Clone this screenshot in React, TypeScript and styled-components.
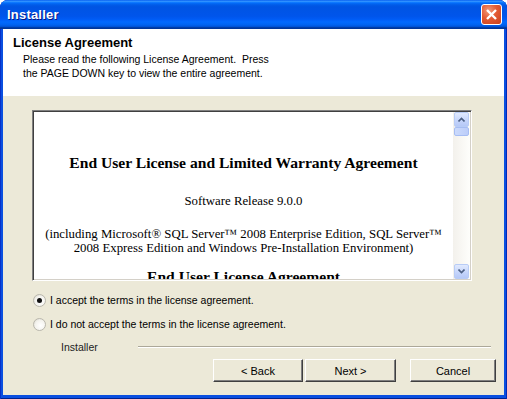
import React from 'react';
import styled, { createGlobalStyle } from 'styled-components';

const GlobalStyle = createGlobalStyle`
  html, body {
    margin: 0;
    padding: 0;
    background: #ffffff;
  }
  body {
    font-family: "Liberation Sans", Arial, sans-serif;
    font-size: 10.5px;
    color: #000;
  }
`;

const Window = styled.div`
  width: 507px;
  height: 399px;
  display: flex;
  flex-direction: column;
  background: #0a4fe0;
  border-radius: 8px 8px 0 0;
  box-shadow: inset 1px 0 #0831c8, inset -1px 0 #0029b8, inset 0 -1px #00228f;
  overflow: hidden;
`;

const TitleBar = styled.div`
  height: 29px;
  flex: none;
  display: flex;
  align-items: center;
  justify-content: space-between;
  padding: 0 5px 0 7px;
  background: linear-gradient(
    to bottom,
    #0058ee 0%,
    #3593ff 4%,
    #288eff 6%,
    #127dff 8%,
    #036ffc 10%,
    #0262ee 14%,
    #0057e5 20%,
    #0054e3 24%,
    #0055eb 56%,
    #005bf5 66%,
    #026afe 76%,
    #0062ef 86%,
    #0052d6 92%,
    #0040ab 94%,
    #003092 100%
  );
`;

const Title = styled.span`
  font-family: "Liberation Sans", Arial, sans-serif;
  font-weight: bold;
  font-size: 13px;
  color: #fff;
  text-shadow: 1px 1px #0a1883;
  letter-spacing: 0.2px;
`;

const CloseButton = styled.div`
  width: 21px;
  height: 21px;
  box-sizing: border-box;
  border: 1px solid #fff;
  border-radius: 3px;
  background: radial-gradient(circle at 35% 30%, #f29a7a 0%, #e35a33 45%, #c9401c 100%);
  display: flex;
  align-items: center;
  justify-content: center;
`;

const Body = styled.div`
  flex: 1;
  display: flex;
  flex-direction: column;
  margin: 0 3px 4px 3px;
  background: #ece9d8;
`;

const Header = styled.div`
  height: 67px;
  flex: none;
  box-sizing: border-box;
  background: #fff;
  padding: 6px 0 0 10px;
`;

const HeaderTitle = styled.div`
  font-weight: bold;
  font-size: 13px;
  line-height: 15px;
`;

const HeaderText = styled.div`
  margin: 2px 0 0 10px;
  line-height: 14px;
  white-space: pre;
`;

const LicenseBox = styled.div`
  margin: 14px 0 0 29px;
  width: 440px;
  height: 171px;
  box-sizing: border-box;
  display: flex;
  background: #fff;
  border: 1px solid;
  border-color: #808080 #ffffff #ffffff #808080;
  box-shadow: inset 1px 1px #404040, inset -1px -1px #d4d0c8;
  padding: 1px;
`;

const Doc = styled.div`
  flex: 1;
  overflow: hidden;
  text-align: center;
  font-family: "Liberation Serif", "Times New Roman", serif;
  font-size: 12.8px;
  padding-top: 42px;
`;

const DocHeading = styled.div<{ gap?: number }>`
  font-weight: bold;
  font-size: 15.6px;
  line-height: 18px;
  margin-top: ${(p) => p.gap ?? 0}px;
  white-space: nowrap;
`;

const DocLine = styled.div<{ gap?: number }>`
  line-height: 14px;
  margin-top: ${(p) => p.gap ?? 0}px;
  white-space: nowrap;
`;

const ScrollBar = styled.div`
  width: 17px;
  flex: none;
  display: flex;
  flex-direction: column;
  background: linear-gradient(to right, #f3f1ec, #fefefb);
`;

const ScrollButton = styled.div`
  height: 15px;
  flex: none;
  margin: 0 1px 0 1px;
  box-sizing: border-box;
  border: 1px solid #b8ccf6;
  border-radius: 2px;
  background: linear-gradient(to bottom, #e1eafe, #c4d4fb 60%, #b6c9f7);
  display: flex;
  align-items: center;
  justify-content: center;
`;

const ScrollThumb = styled.div`
  height: 9px;
  flex: none;
  margin: 0 1px;
  box-sizing: border-box;
  border: 1px solid #a6bdf3;
  border-radius: 2px;
  background: linear-gradient(to right, #cbdafc, #bccdf9);
`;

const ScrollTrack = styled.div`
  flex: 1;
`;

const Options = styled.div`
  margin-top: 11px;
  display: flex;
  flex-direction: column;
  gap: 8px;
`;

const OptionRow = styled.label`
  height: 16px;
  display: flex;
  align-items: center;
  gap: 4px;
  padding-left: 30px;
`;

const Radio = styled.span<{ checked?: boolean }>`
  width: 13px;
  height: 13px;
  box-sizing: border-box;
  border-radius: 50%;
  border: 1px solid #b9b7ad;
  background: radial-gradient(circle at 60% 60%, #ffffff 0%, #f4f3ee 55%, #d6d3c7 100%);
  display: flex;
  align-items: center;
  justify-content: center;
  &::after {
    content: '';
    width: 5px;
    height: 5px;
    border-radius: 50%;
    background: ${(p) => (p.checked ? '#111' : 'transparent')};
  }
`;

const BrandRow = styled.div`
  margin-top: 8px;
  height: 14px;
  display: flex;
  align-items: center;
  padding: 0 13px 0 58px;
`;

const BrandLabel = styled.span`
  width: 77px;
  flex: none;
  color: #222;
`;

const Etched = styled.div`
  flex: 1;
  border-top: 1px solid #aca899;
  border-bottom: 1px solid #ffffff;
`;

const ButtonRow = styled.div`
  margin-top: 5px;
  display: flex;
  justify-content: flex-end;
  padding-right: 8px;
`;

const Button = styled.div<{ w: number; gap?: number }>`
  width: ${(p) => p.w}px;
  height: 23px;
  margin-left: ${(p) => p.gap ?? 0}px;
  box-sizing: border-box;
  display: flex;
  align-items: center;
  justify-content: center;
  background: #ece9d8;
  border: 1px solid;
  border-color: #ffffff #404040 #404040 #ffffff;
  box-shadow: inset -1px -1px #808080;
  font-size: 11px;
`;

const Arrow = ({ up }: { up?: boolean }) => (
  <svg width="7" height="5" viewBox="0 0 7 5">
    <path
      d={up ? 'M0.5 4.5 L3.5 1.5 L6.5 4.5' : 'M0.5 0.5 L3.5 3.5 L6.5 0.5'}
      fill="none"
      stroke="#4d6185"
      strokeWidth="1.6"
    />
  </svg>
);

export default function App() {
  return (
    <>
      <GlobalStyle />
      <Window>
        <TitleBar>
          <Title>Installer</Title>
          <CloseButton>
            <svg width="13" height="13" viewBox="0 0 13 13">
              <path d="M2 2 L11 11 M11 2 L2 11" stroke="#fff" strokeWidth="2.4" />
            </svg>
          </CloseButton>
        </TitleBar>
        <Body>
          <Header>
            <HeaderTitle>License Agreement</HeaderTitle>
            <HeaderText>
              {'Please read the following License Agreement.  Press\nthe PAGE DOWN key to view the entire agreement.'}
            </HeaderText>
          </Header>

          <LicenseBox>
            <Doc>
              <DocHeading>End User License and Limited Warranty Agreement</DocHeading>
              <DocLine gap={22}>Software Release 9.0.0</DocLine>
              <DocLine gap={19}>(including Microsoft® SQL Server™ 2008 Enterprise Edition, SQL Server™</DocLine>
              <DocLine>2008 Express Edition and Windows Pre-Installation Environment)</DocLine>
              <DocHeading gap={13}>End User License Agreement</DocHeading>
            </Doc>
            <ScrollBar>
              <ScrollButton>
                <Arrow up />
              </ScrollButton>
              <ScrollThumb />
              <ScrollTrack />
              <ScrollButton>
                <Arrow />
              </ScrollButton>
            </ScrollBar>
          </LicenseBox>

          <Options>
            <OptionRow>
              <Radio checked />
              <span>I accept the terms in the license agreement.</span>
            </OptionRow>
            <OptionRow>
              <Radio />
              <span>I do not accept the terms in the license agreement.</span>
            </OptionRow>
          </Options>

          <BrandRow>
            <BrandLabel>Installer</BrandLabel>
            <Etched />
          </BrandRow>

          <ButtonRow>
            <Button w={90}>&lt; Back</Button>
            <Button w={91} gap={2}>Next &gt;</Button>
            <Button w={86} gap={14}>Cancel</Button>
          </ButtonRow>
        </Body>
      </Window>
    </>
  );
}
